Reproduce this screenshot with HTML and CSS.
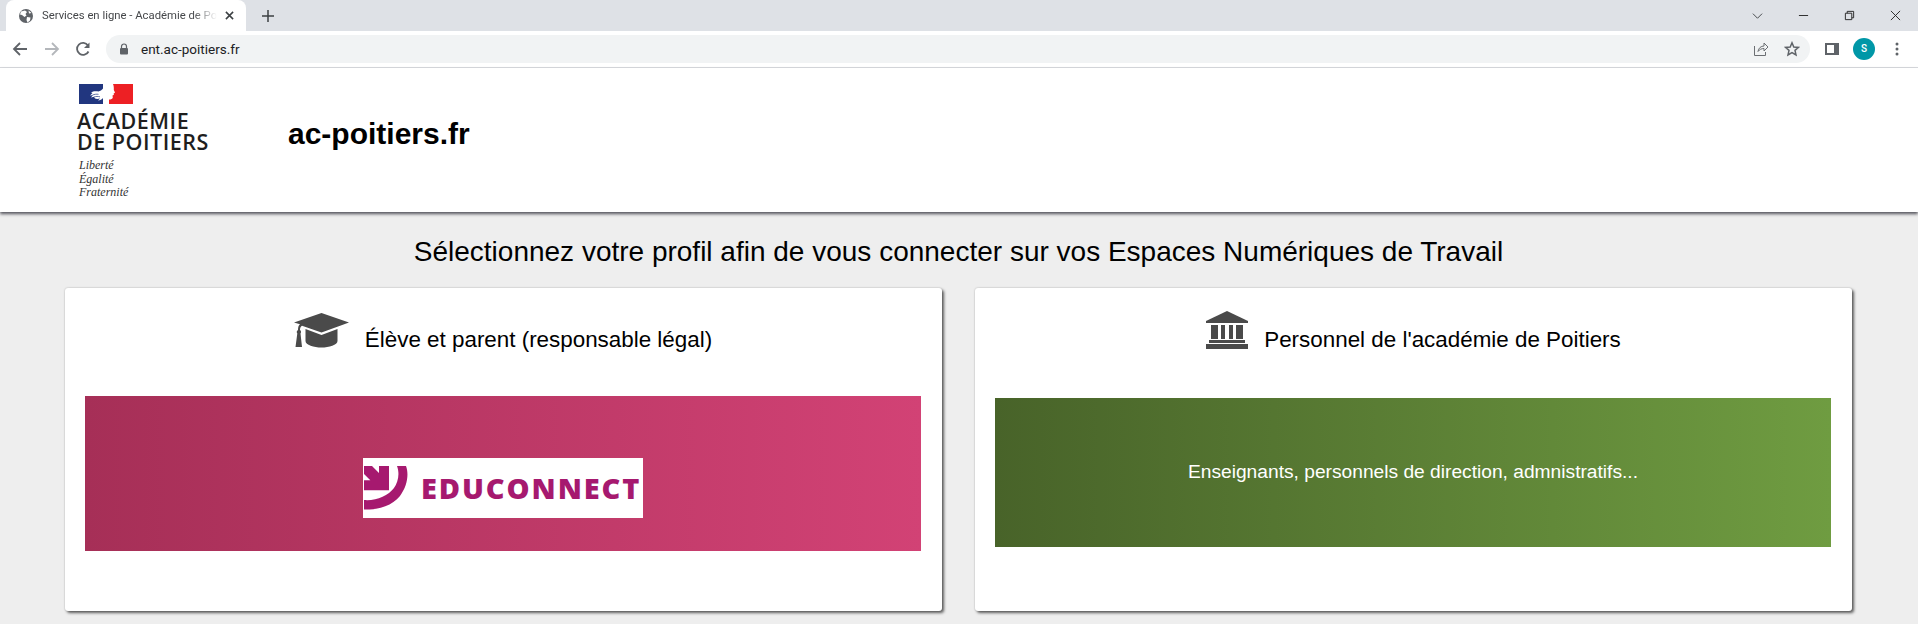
FILE: index.html
```html
<!DOCTYPE html>
<html lang="fr">
<head>
<meta charset="utf-8">
<title>Services en ligne - Académie de Poitiers</title>
<link rel="stylesheet" href="styles.css">
</head>
<body>
<div class="tabstrip">
  <div class="tab">
    <svg class="globe" viewBox="0 0 16 16"><circle cx="8" cy="8" r="7" fill="#5f6368"/><path d="M3 3.500 7 2.500 9 4 7.500 6 8.500 7.500 6.500 9 4 7 2 6.500ZM9 9 12.500 9.500 12 12.500 9.500 14.500 8.500 12ZM10.500 2.500 13.500 5 11 5.500Z" fill="#fff"/></svg>
    <span class="tab-title">Services en ligne - Académie de Poitiers</span>
    <svg class="tab-close" viewBox="0 0 10 10"><path d="M1 1 9 9M9 1 1 9" stroke="#3c4043" stroke-width="1.700"/></svg>
  </div>
  <svg class="newtab" viewBox="0 0 12 12"><path d="M6 0V12M0 6H12" stroke="#3c4043" stroke-width="1.500"/></svg>
  <div class="winctl">
    <svg class="w-ico" viewBox="0 0 12 12"><path d="M1 4 6 9 11 4" fill="none" stroke="#3c4043"/></svg>
    <svg class="w-ico" viewBox="0 0 12 12"><path d="M1 6H11" stroke="#222" stroke-width="1"/></svg>
    <svg class="w-ico" viewBox="0 0 12 12"><path d="M1.500 3.500H8.500V10.500H1.500ZM3.500 3.500V1.500H10.500V8.500H8.500" fill="none" stroke="#222"/></svg>
    <svg class="w-ico" viewBox="0 0 12 12"><path d="M1 1 11 11M11 1 1 11" stroke="#222"/></svg>
  </div>
</div>
<div class="toolbar">
  <svg class="nav first" viewBox="0 0 16 16"><path d="M15 8H2M8 2 2 8 8 14" fill="none" stroke="#5f6368" stroke-width="1.800"/></svg>
  <svg class="nav" viewBox="0 0 16 16"><path d="M1 8H14M8 2 14 8 8 14" fill="none" stroke="#b4b7bb" stroke-width="1.800"/></svg>
  <svg class="nav reload" viewBox="0 0 16 16"><path d="M13.500 10.500A6 6 0 1 1 13 4.500" fill="none" stroke="#5f6368" stroke-width="1.800"/><path d="M14.500 1.500V7H9Z" fill="#5f6368"/></svg>
  <div class="omnibox">
    <svg class="lock" viewBox="0 0 10 12"><path d="M2.500 5V3.500a2.500 2.500 0 0 1 5 0V5" fill="none" stroke="#5f6368" stroke-width="1.200"/><rect x="1" y="5" width="8" height="6.500" rx="1" fill="#5f6368"/></svg>
    <span class="url">ent.ac-poitiers.fr</span>
    <svg class="omni-ico share" viewBox="0 0 16 16"><path d="M1.500 5V14.500H12.500V11M5 10.500C5.500 7 8 5 11 5V2L15 6 11 10V7.500C8.500 7.500 6.500 8.500 5 10.500Z" fill="none" stroke="#6b6e72" stroke-width="1"/></svg>
    <svg class="omni-ico star" viewBox="0 0 16 16"><path d="M8 1.800 9.800 6 14.500 6.400 11 9.400 12 14 8 11.600 4 14 5 9.400 1.500 6.400 6.200 6Z" fill="none" stroke="#5f6368" stroke-width="1.500"/></svg>
  </div>
  <svg class="panel" viewBox="0 0 14 12"><path d="M0 0H14V12H0ZM2 2V10H9V2Z" fill="#5f6368" fill-rule="evenodd"/></svg>
  <div class="avatar">S</div>
  <svg class="menu" viewBox="0 0 4 14"><circle cx="2" cy="2" r="1.500" fill="#5f6368"/><circle cx="2" cy="7" r="1.500" fill="#5f6368"/><circle cx="2" cy="12" r="1.500" fill="#5f6368"/></svg>
</div>

<header class="site-header">
  <div class="logo">
    <svg class="flag" viewBox="0 0 54 20"><rect width="24" height="20" fill="#21367f"/><path d="M34 0H54V20H30V15.500C32 15.500 33.500 15 33.800 13.500L33.500 11.500 35 10.800 34.500 9.800 36 8.500 34.800 6C35 3.500 34.700 1.500 34 0Z" fill="#ed2024"/><path d="M24 4.500C23 6 21 7 19.500 7.500 17 7 14 7 12 8.500L13.500 9 11 11.500 14 11 12 13.500 15 12.800C15.500 15 18 15.500 21 14.500L19 16.500C21 16.500 23 15.500 24 14Z" fill="#fff"/><path d="M13.500 11C15.500 10.300 17.500 10 19.500 10.300M15 13C17 12.300 19 12.300 21 12.800" stroke="#21367f" stroke-width=".7" fill="none"/></svg>
    <div class="logo-name">ACADÉMIE<br>DE POITIERS</div>
    <div class="logo-motto">Liberté<br>Égalité<br>Fraternité</div>
  </div>
  <div class="site-name">ac-poitiers.fr</div>
</header>

<main class="content">
  <h1 class="page-title">Sélectionnez votre profil afin de vous connecter sur vos Espaces Numériques de Travail</h1>
  <div class="cards">
    <section class="card">
      <div class="card-head">
        <svg class="cap" viewBox="0 0 57 35"><path d="M28.500 0 56 9.500 28.500 19.500 9 12.700C7.500 13.800 7 15 7 17 8.300 18 8.300 19.500 7.500 20.500L9 34H2.500L4.300 20.500C3.300 19 3.700 18 5 17 5 14.500 5.500 12.500 7 11.300L1 9.500Z" fill="#4a4a4a"/><path d="M12.500 16 28.500 22 44.500 16V28C44.500 32 36 34.500 28.500 34.500S12.500 32 12.500 28Z" fill="#4a4a4a"/></svg>
        <h2 class="card-title">Élève et parent (responsable légal)</h2>
      </div>
      <a class="banner banner-pink">
        <span class="edu-logo">
          <svg class="edu-mark" viewBox="0 0 44 44"><path d="M33 0H42C45 8 43.500 20 36 30 28 40 14 44 0 43.500V34C12 35 24 30 30 22 34 16 36 8 33 0Z" fill="#a6196f"/><path d="M0 0H8L15 7V0H25V24.300H0V14.300H6.300L0 8Z" fill="#a6196f"/></svg>
          <span class="edu-text">EDUCONNECT</span>
        </span>
      </a>
    </section>
    <section class="card">
      <div class="card-head head-right">
        <svg class="bank" viewBox="0 0 44 38"><path d="M22 0 43 10V12H1V10Z" fill="#4a4a4a"/><path d="M6 14H13V28H6ZM16 14H20V28H16ZM24 14H28V28H24ZM31 14H38V28H31ZM4 29H40V32H4ZM1 33H43V38H1Z" fill="#4a4a4a"/></svg>
        <h2 class="card-title">Personnel de l'académie de Poitiers</h2>
      </div>
      <a class="banner banner-green">Enseignants, personnels de direction, admnistratifs...</a>
    </section>
  </div>
</main>
</body>
</html>
```

FILE: styles.css
```css
* { box-sizing: border-box; }
html, body { margin: 0; height: 624px; overflow: hidden; }
body { background: #eee; font-family: "Liberation Sans", Arial, sans-serif; color: #000; }

.tabstrip { height: 31px; background: #dee1e6; display: flex; align-items: center; }
.tab { width: 240px; height: 31px; margin-left: 6px; background: #fff; border-radius: 8px 8px 0 0; display: flex; align-items: center; padding-left: 12px; }
.globe { width: 16px; height: 16px; flex: none; }
.tab-title { width: 175px; margin-left: 8px; font: 11.300px "Roboto", "Liberation Sans", sans-serif; color: #45474a; white-space: nowrap; overflow: hidden; -webkit-mask-image: linear-gradient(90deg, #000 86%, transparent); mask-image: linear-gradient(90deg, #000 86%, transparent); }
.tab-close { width: 9px; height: 9px; margin-left: 8px; flex: none; }
.newtab { width: 12px; height: 12px; margin-left: 16px; }
.winctl { margin-left: auto; display: flex; align-items: center; }
.w-ico { width: 11px; height: 11px; margin-right: 35px; }
.w-ico:last-child { margin-right: 17px; }

.toolbar { height: 37px; background: #fff; border-bottom: 1px solid #dadce0; display: flex; align-items: center; padding-bottom: 1px; }
.nav { width: 16px; height: 16px; margin-left: 16px; flex: none; }
.nav.first { margin-left: 12px; }
.nav.reload { margin-left: 15px; }
.omnibox { flex: 1; margin-left: 15px; height: 28px; background: #f1f3f4; border-radius: 14px; display: flex; align-items: center; padding-left: 13px; }
.lock { width: 10px; height: 12px; }
.url { margin-left: 12px; font: 13.500px "Roboto", "Liberation Sans", sans-serif; color: #202124; }
.omni-ico { width: 16px; height: 16px; }
.share { margin-left: auto; }
.star { margin-left: 15px; margin-right: 10px; }
.panel { width: 14px; height: 12px; margin-left: 15px; flex: none; }
.avatar { width: 22px; height: 22px; margin-left: 14px; border-radius: 50%; background: #0097a7; color: #fff; font: 500 10px/22px "Roboto", sans-serif; text-align: center; flex: none; }
.menu { width: 4px; height: 14px; margin: 0 19px 0 20px; flex: none; }

.site-header { height: 144px; background: #fff; box-shadow: 0 2px 3px rgba(30, 30, 40, .75); display: flex; position: relative; }
.logo { width: 288px; padding: 16px 0 0 77px; flex: none; }
.flag { display: block; width: 54px; height: 20px; margin-left: 2px; }
.logo-name { margin-top: 6px; font: 600 21.500px/21px "Open Sans", sans-serif; color: #1e1e1e; letter-spacing: .5px; white-space: nowrap; }
.logo-motto { margin: 7px 0 0 2px; font: italic 12px/13.500px "Liberation Serif", serif; color: #333; }
.site-name { margin-top: 50px; font-size: 30px; line-height: 32px; font-weight: 700; }

.content { padding: 0 66px 0 65px; }
.page-title { margin: 0; padding-top: 24px; height: 76px; text-align: center; font-weight: 400; font-size: 28px; line-height: 32px; }
.cards { display: flex; gap: 33px; }
.card { flex: 1; height: 323px; background: #fff; border-radius: 3px; box-shadow: 2px 2px 3px rgba(0, 0, 0, .6), 0 0 2px rgba(0, 0, 0, .25); padding: 0 21px 0 20px; }
.card-head { height: 108px; display: flex; justify-content: center; align-items: flex-start; gap: 15px; padding: 25px 1px 0 0; }
.head-right { height: 110px; padding: 23px 0 0 0; gap: 15px; }
.cap { width: 57px; height: 35px; flex: none; }
.bank { width: 44px; height: 38px; flex: none; }
.card-title { margin: 14px 0 0; font-size: 22.400px; line-height: 26px; font-weight: 400; }
.head-right .card-title { margin-top: 16px; }
.banner { display: flex; justify-content: center; color: #fff; }
.banner-pink { height: 155px; background: linear-gradient(90deg, #a62f57, #d24275); padding-top: 62px; }
.banner-green { height: 149px; background: linear-gradient(90deg, #486329, #6f9c41); font-size: 19.200px; align-items: center; padding-bottom: 1px; }
.edu-logo { width: 280px; height: 60px; background: #fff; display: flex; align-items: center; padding-left: 1px; }
.edu-mark { width: 44px; height: 44px; flex: none; }
.edu-text { margin-left: 13px; font: 800 29px/40px "Open Sans", "Liberation Sans", sans-serif; letter-spacing: 1.900px; color: #a6196f; white-space: nowrap; }
```
